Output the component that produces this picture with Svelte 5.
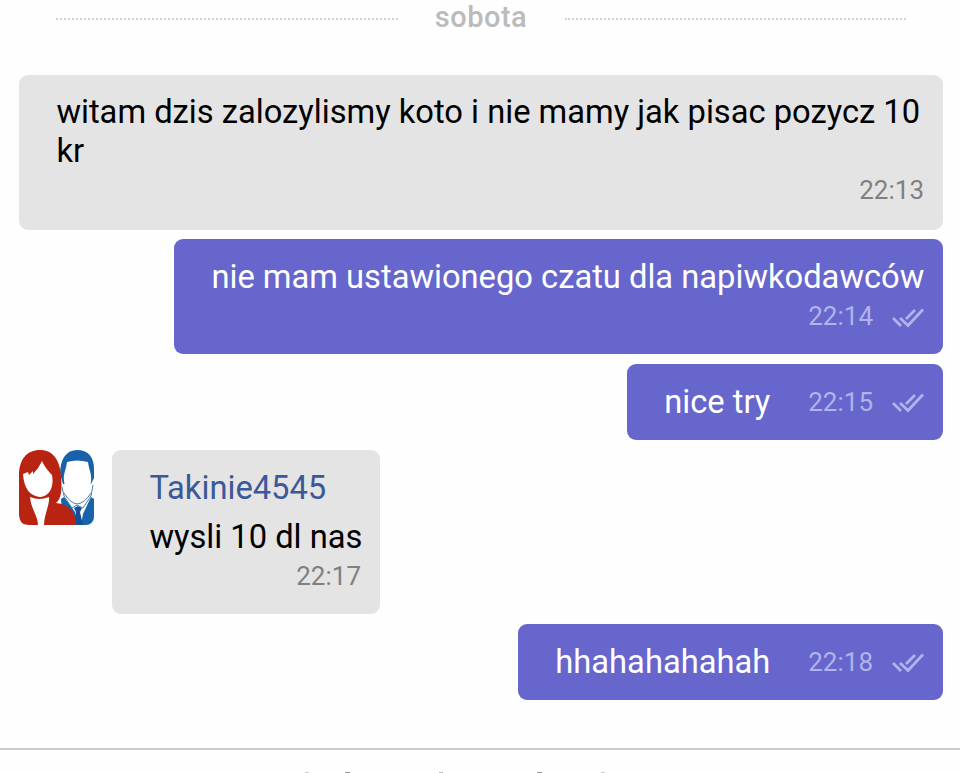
<script>

    const messages = [
        { text: "witam dzis zalozylismy koto i nie mamy jak pisac pozycz 10 kr", time: "22:13", kind: "wide" },
        { text: "nie mam ustawionego czatu dla napiwkodawców", time: "22:14", own: true, kind: "long" },
        { text: "nice try", time: "22:15", own: true, kind: "short" },
        { text: "wysli 10 dl nas", time: "22:17", author: "Takinie4545", kind: "named" },
        { text: "hhahahahahah", time: "22:18", own: true, kind: "short" }
    ];

    // tops of the letters that stick out under the footer line
    const tips = [
        { x: 305, w: 4, c: "#ccc" },
        { x: 345, w: 5, c: "#999" },
        { x: 439, w: 4, c: "#bbb" },
        { x: 537, w: 5, c: "#999" },
        { x: 601, w: 4, c: "#ccc" }
    ];

</script>

<div class="chat">

    <div class="day">
        <span class="dots"></span>
        <span class="label">sobota</span>
        <span class="dots"></span>
    </div>

    <div class="messages">
        {#each messages as m}
            <div class="row" class:own={m.own}>

                {#if m.author}
                    <svg class="avatar" width="75" height="75" viewBox="0 0 75 75">
                        <path d="M41 24C41 8 48 0 58 0C69 0 75 7 75 19V28L72 34H44Z" fill="#1762a8" />
                        <path d="M45 31C44 24 47 20 48 12Q58 9 69 12C70 20 73 24 72 32C70 41 66 48 58 49C51 48 46 41 45 31Z" fill="#fff" />
                        <path d="M42 49L45 47L56 62L58 75H44ZM72 47L75 49V75H62L64 64Z" fill="#1762a8" />
                        <path d="M55 58L59 56L63 58L61 62L64 75H54L57 62Z" fill="#174f94" />
                        <path d="M43 37L45 46L53 58L58 55L64 58L72 46L74 35M45 43Q51 53 58 54Q66 53 72 43" fill="none" stroke="#477fae" stroke-width="1" />
                        <path d="M0 65V26C0 9 8 0 21 0C34 0 41 10 42 26C43 37 43 48 37 53C50 54 57 63 57 75H10Q0 75 0 65Z" fill="#b92412" />
                        <path d="M4 24L9 22L10 25L14 21V24Q20 18 23 11Q26 18 33 25C35 35 32 46 21 47C11 46 5 39 4 24Z" fill="#fff" />
                        <path d="M11 47Q20 51 30 47C31 54 25 65 25 75H19C19 66 12 59 11 47Z" fill="#fff" />
                    </svg>
                {/if}

                <div class="bubble {m.kind}">
                    {#if m.author}
                        <div class="author">{m.author}</div>
                    {/if}
                    <div class="text">{m.text}</div>
                    <div class="meta">
                        <span>{m.time}</span>
                        {#if m.own}
                            <svg width="32" height="20" viewBox="0 0 32 20">
                                <path d="M1 10L9 18M8 10L16 17.5L31 1.5M14 11L23 2" />
                            </svg>
                        {/if}
                    </div>
                </div>

            </div>
        {/each}
    </div>

    <div class="footer">
        <svg width="960" height="23" viewBox="0 0 960 23">
            {#each tips as t}
                <rect x={t.x} y="22" width={t.w} height="1" fill={t.c} />
            {/each}
        </svg>
    </div>

</div>

<style>

:global(body){
    margin:0;
    background:#fefefe;
}

.chat{
    height:773px;
    display:flex;
    flex-direction:column;
    overflow:hidden;
    font-family:Roboto, sans-serif;
    font-size:32.7px;
    line-height:39px;
    color:#000;
}

.day{
    display:flex;
    align-items:center;
    height:37px;
    padding:0 54px 0 56px;
    box-sizing:border-box;
}

.dots{
    flex:1;
    border-top:2px dotted #d4d4d4;
}

.label{
    width:167px;
    margin-top:-3px;
    text-align:center;
    font-size:29px;
    letter-spacing:0.5px;
    font-weight:500;
    color:#bbb;
}

.messages{
    flex:none;
    height:711px;
    box-sizing:border-box;
    padding:37.6px 17px 0 19px;
    display:flex;
    flex-direction:column;
    gap:9.8px;
}

.row{
    display:flex;
    align-items:flex-start;
    gap:18px;
}

.own{
    justify-content:flex-end;
}

.avatar{
    flex:none;
    border-radius:8px;
}

.bubble{
    box-sizing:border-box;
    padding:18.8px 19px 0 37.4px;
    border-radius:9px;
    background:#e4e4e4;
}

.own .bubble{
    background:#6666cc;
    color:#fff;
}

.wide{
    width:924px;
    height:155px;
}

.wide .text{
    margin-right:-6px;
}

.long{
    width:769px;
    height:115px;
}

.long .text, .named .text{
    white-space:nowrap;
}

.short{
    display:flex;
    gap:38px;
    height:76px;
}

.named{
    width:268px;
    height:164px;
}

.author{
    height:49px;
    color:#3b5998;
}

.meta{
    display:flex;
    justify-content:flex-end;
    align-items:center;
    gap:19px;
    height:39px;
    font-size:26px;
    color:#808080;
}

.own .meta{
    color:#b2b2ec;
}

.meta svg{
    margin-top:2px;
    fill:none;
    stroke:#b2b2ec;
    stroke-width:2.8;
}

.footer{
    border-top:2px solid #ccc;
    height:23px;
}

.footer svg{
    display:block;
}

</style>
